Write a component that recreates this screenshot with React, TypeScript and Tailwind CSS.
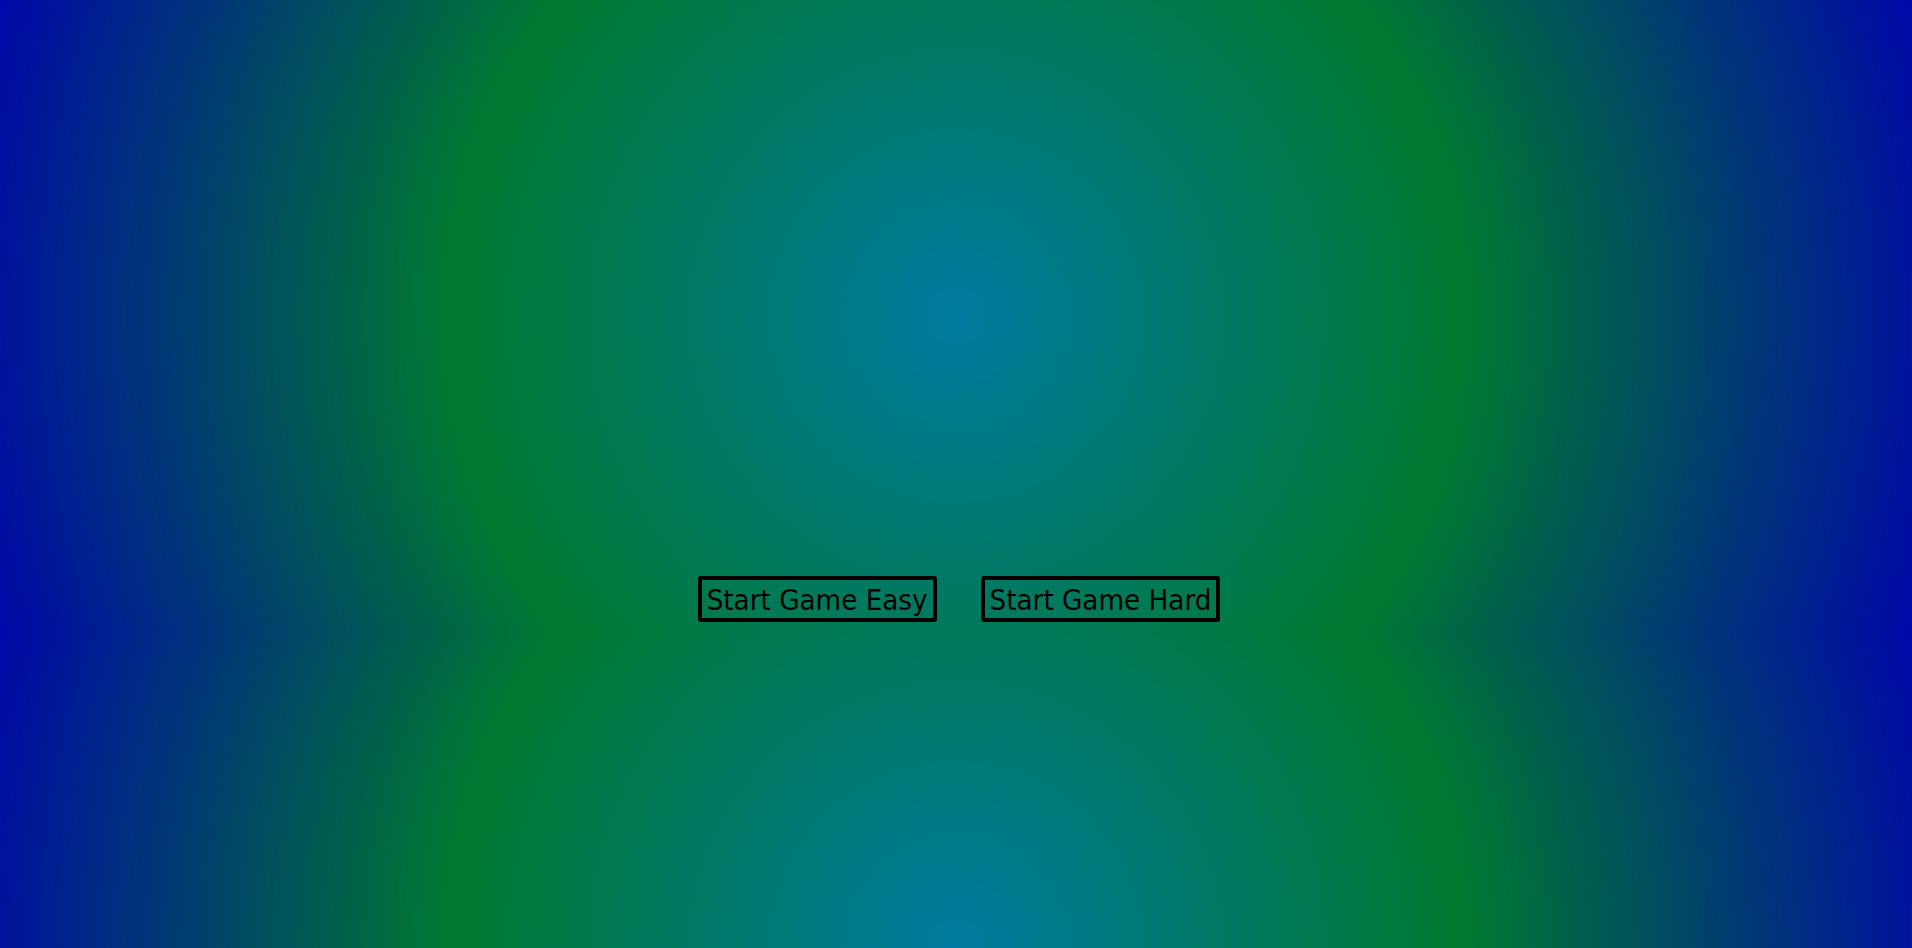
export default function App() {
  return (
    <div className="min-h-screen w-full bg-[radial-gradient(circle,#0079a0,#007a30,#0008a8)] bg-[length:100%_632px] bg-repeat pt-[576px]">
      <div className="flex justify-center gap-[44px] pl-[6px]">
        <button
          type="button"
          className="flex h-[46px] items-center rounded-[3px] border-4 border-black px-[5px] pt-1 font-['DejaVu_Sans_Condensed','DejaVu_Sans',sans-serif] text-[29.2px] leading-none text-black [font-stretch:condensed]"
        >
          Start Game Easy
        </button>
        <button
          type="button"
          className="flex h-[46px] items-center rounded-[3px] border-4 border-black px-[5px] pt-1 font-['DejaVu_Sans_Condensed','DejaVu_Sans',sans-serif] text-[29.2px] leading-none text-black [font-stretch:condensed]"
        >
          Start Game Hard
        </button>
      </div>
    </div>
  );
}
